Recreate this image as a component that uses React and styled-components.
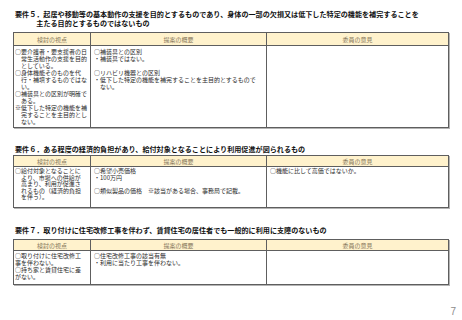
import styled, { createGlobalStyle } from "styled-components";

const GlobalStyle = createGlobalStyle`
  html, body {
    margin: 0;
    padding: 0;
    background: #ffffff;
  }
  body {
    font-family: "Noto Sans CJK JP", "Noto Sans", sans-serif;
    color: #222;
  }
`;

const Page = styled.div`
  width: 462px;
  height: 320px;
  box-sizing: border-box;
  padding-top: 10px;
  overflow: hidden;
`;

const Section = styled.section`
  margin-top: ${(p) => p.$gap}px;
`;

const Heading = styled.h2`
  margin: 0;
  padding-left: 15px;
  font-size: 7.1px;
  line-height: 9px;
  font-weight: 700;
  color: #111;
  white-space: nowrap;
`;

const HeadingLine = styled.span`
  display: block;
  padding-left: ${(p) => (p.$indent ? "3em" : "0")};
`;

const Grid = styled.div`
  margin-top: ${(p) => p.$gap}px;
  margin-left: 13px;
  width: 436px;
  box-sizing: border-box;
  display: grid;
  grid-template-columns: 76px 176px 182px;
  border: 1px solid #5e5e5e;
  box-shadow: 1px 1px 0 #b4b4b4;
`;

const HeadCell = styled.div`
  height: ${(p) => p.$h}px;
  box-sizing: border-box;
  display: flex;
  align-items: center;
  justify-content: center;
  background: #fff2cc;
  border-bottom: 1px solid #5e5e5e;
  font-size: 6px;
  color: #86765a;

  &:not(:nth-child(3n + 1)) {
    border-left: 1px solid #5e5e5e;
  }
`;

const BodyCell = styled.div`
  min-height: ${(p) => p.$h}px;
  box-sizing: border-box;
  padding: ${(p) => p.$top}px 3px 2px;
  font-size: 6px;
  line-height: ${(p) => p.$lh}px;
  color: #2a2a2a;
  white-space: nowrap;

  &:nth-child(3n + 1) {
    padding-left: 1px;
  }
  &:not(:nth-child(3n + 1)) {
    border-left: 1px solid #5e5e5e;
  }
`;

const Line = styled.span`
  display: block;
  min-height: 1lh;
  padding-left: ${(p) => (p.$indent ? "1em" : "0")};
`;

const PageNo = styled.div`
  margin-top: 21px;
  padding-right: 6px;
  text-align: right;
  font-family: "Liberation Sans", sans-serif;
  font-size: 10px;
  line-height: 12px;
  color: #8c8c8c;
`;

const HEADS = ["検討の視点", "提案の概要", "委員の意見"];

// each line: [text, indented]
const sections = [
  {
    gap: 0,
    title: [
      "要件５．起居や移動等の基本動作の支援を目的とするものであり、身体の一部の欠損又は低下した特定の機能を補完することを",
      "主たる目的とするものではないもの",
    ],
    tableGap: 4,
    headH: 13,
    bodyH: 81,
    lh: 7,
    top: 1.5,
    cells: [
      [
        ["○要介護者・要支援者の日"],
        ["常生活動作の支援を目的", 1],
        ["としている。", 1],
        ["○身体機能そのものを代"],
        ["行・補填するものではな", 1],
        ["い。", 1],
        ["○補装具との区別が明確で"],
        ["ある。", 1],
        ["※低下した特定の機能を補"],
        ["完することを主目的とし", 1],
        ["ない。", 1],
      ],
      [
        ["○補装具との区別"],
        ["・補装具ではない。"],
        [""],
        ["○リハビリ機器との区別"],
        ["・低下した特定の機能を補完することを主目的とするもので"],
        ["ない。", 1],
      ],
      [],
    ],
  },
  {
    gap: 17,
    title: [
      "要件６．ある程度の経済的負担があり、給付対象となることにより利用促進が図られるもの",
    ],
    tableGap: 1,
    headH: 11,
    bodyH: 40,
    lh: 6.6,
    top: 1,
    cells: [
      [
        ["○給付対象となることに"],
        ["より、市場への供給が", 1],
        ["高まり、利用が促進さ", 1],
        ["れるもの（経済的負担", 1],
        ["を伴う）。", 1],
      ],
      [
        ["○希望小売価格"],
        ["・100万円"],
        [""],
        ["○類似製品の価格　※該当がある場合、事務局で記載。"],
      ],
      [["○機能に比して高価ではないか。"]],
    ],
  },
  {
    gap: 18,
    title: [
      "要件７．取り付けに住宅改修工事を伴わず、賃貸住宅の居住者でも一般的に利用に支障のないもの",
    ],
    tableGap: 4,
    headH: 11,
    bodyH: 33,
    lh: 7,
    top: 1,
    cells: [
      [
        ["○取り付けに住宅改修工"],
        ["事を伴わない。"],
        ["○持ち家と賃貸住宅に差"],
        ["がない。"],
      ],
      [["○住宅改修工事の該当有無"], ["・利用に当たり工事を伴わない。"]],
      [],
    ],
  },
];

const App = () => {
  return (
    <>
      <GlobalStyle />
      <Page>
        {sections.map((s, si) => (
          <Section key={si} $gap={s.gap}>
            <Heading>
              {s.title.map((t, i) => (
                <HeadingLine key={i} $indent={i > 0}>
                  {t}
                </HeadingLine>
              ))}
            </Heading>
            <Grid $gap={s.tableGap}>
              {HEADS.map((h) => (
                <HeadCell key={h} $h={s.headH}>
                  {h}
                </HeadCell>
              ))}
              {s.cells.map((lines, ci) => (
                <BodyCell key={ci} $h={s.bodyH} $lh={s.lh} $top={s.top}>
                  {lines.map(([t, ind], li) => (
                    <Line key={li} $indent={!!ind}>
                      {t}
                    </Line>
                  ))}
                </BodyCell>
              ))}
            </Grid>
          </Section>
        ))}
        <PageNo>7</PageNo>
      </Page>
    </>
  );
};

export default App;
